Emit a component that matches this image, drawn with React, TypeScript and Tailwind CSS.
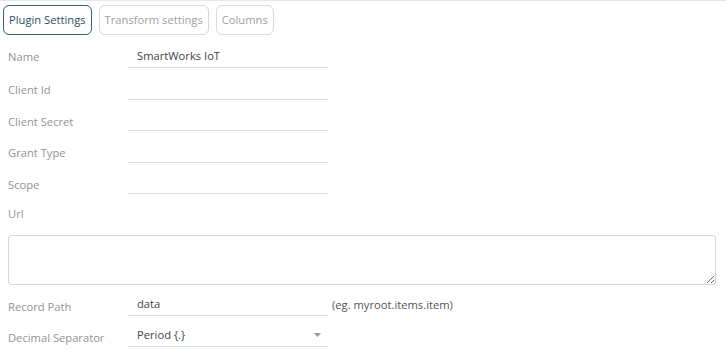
import { ChangeEvent, useState } from 'react';

const TABS = ['Plugin Settings', 'Transform settings', 'Columns'];

const FIELDS: { label: string; value?: string }[] = [
  { label: 'Name', value: 'SmartWorks IoT' },
  { label: 'Client Id' },
  { label: 'Client Secret' },
  { label: 'Grant Type' },
  { label: 'Scope' },
];

function FieldRow({ label, children, hint, lift }: { label: string; children: React.ReactNode; hint?: string; lift?: boolean }) {
  return (
    <div className="flex h-[24px] items-center">
      <div className={`w-[128px] pl-[8px] text-[#939393] ${lift ? 'pt-[1px]' : 'pt-[5px]'}`}>{label}</div>
      {children}
      {hint && <div className="ml-[4px] pt-[1px] text-[#555]">{hint}</div>}
    </div>
  );
}

export default function App() {
  const [active, setActive] = useState(0);
  const [url, setUrl] = useState('');

  return (
    <div
      className="h-[352px] w-[726px] overflow-hidden border-t border-[#e6e6e6] bg-white text-[11.2px] leading-none"
      style={{ fontFamily: '"Open Sans", "Noto Sans", sans-serif' }}
    >
      {/* tab buttons */}
      <div className="flex gap-[7px] pl-[3px] pt-[4px]">
        {TABS.map((t, i) => (
          <button
            key={t}
            onClick={() => setActive(i)}
            className={`h-[30px] rounded-[6px] border px-[5px] pb-[1px] ${
              i === active ? 'border-[#2f6373] text-[#2d4f5e]' : 'border-[#d9d9d9] text-[#a0a0a0]'
            }`}
          >
            {t}
          </button>
        ))}
      </div>

      <div className="mt-[9px] flex flex-col gap-[7.5px]">
        {FIELDS.map((f, i) => (
          <FieldRow key={f.label} label={f.label} lift={i === 0}>
            <div className="flex h-[24px] w-[200px] items-center border-b border-[#d9d9d9] pl-[9px] text-[#444]">
              {f.value}
            </div>
          </FieldRow>
        ))}
      </div>

      {/* url */}
      <div className="mt-[14px] pl-[8px] text-[#939393]">Url</div>
      <div className="mt-[16px] pl-[8px]">
        <textarea
          value={url}
          onChange={(e: ChangeEvent<HTMLTextAreaElement>) => setUrl(e.target.value)}
          className="block h-[50px] w-[708px] rounded-[3px] border border-[#d6d6d6] px-2 py-1 outline-none"
        />
      </div>

      <div className="mt-[7px] flex flex-col gap-[7px]">
        <FieldRow label="Record Path" hint="(eg. myroot.items.item)">
          <div className="flex h-[24px] w-[200px] items-center border-b border-[#d9d9d9] pl-[9px] text-[#444]">data</div>
        </FieldRow>
        <FieldRow label="Decimal Separator">
          <div className="flex h-[24px] w-[200px] items-center justify-between border-b border-[#d9d9d9] pl-[9px] pr-[7px] text-[#444]">
            <span>Period {'{.}'}</span>
            <svg width="7" height="4" viewBox="0 0 7 4">
              <path d="M0 0h7L3.5 4z" fill="#9a9a9a" />
            </svg>
          </div>
        </FieldRow>
      </div>
    </div>
  );
}
